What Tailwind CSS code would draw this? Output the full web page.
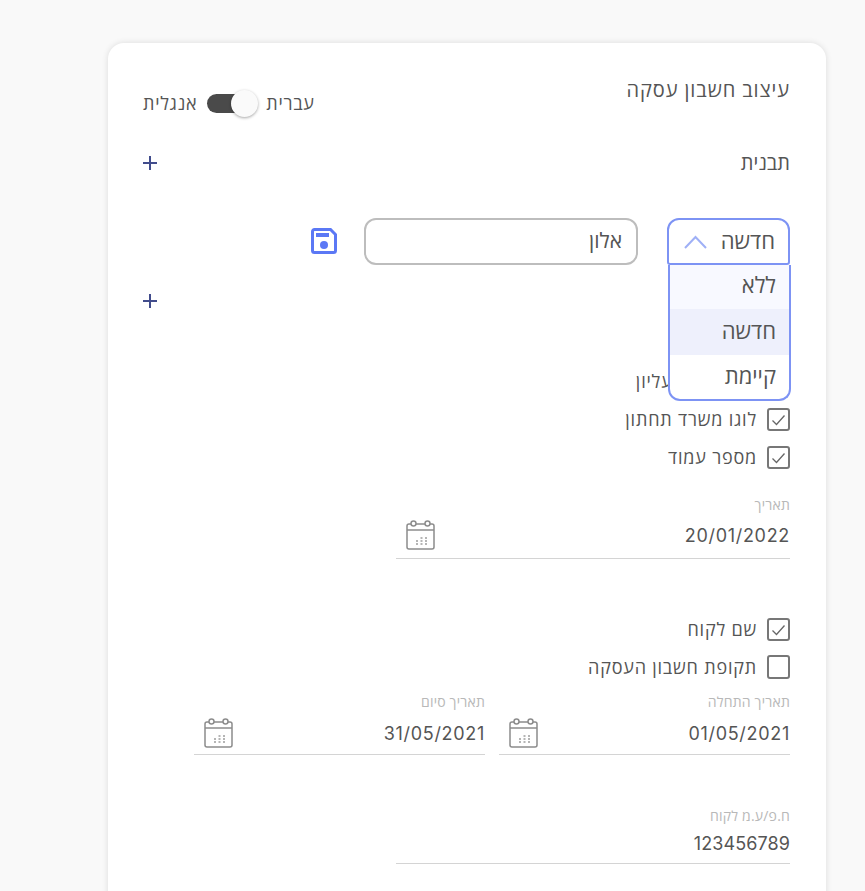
<!DOCTYPE html>
<html dir="rtl" lang="he">
  <head>
    <title>עיצוב חשבון עסקה</title>
    <script src="https://cdn.jsdelivr.net/npm/@tailwindcss/browser@4"></script>
  </head>
  <body>
    <div class="h-[891px] overflow-hidden bg-[#f9f9f9] pt-[43px] pr-[39px] font-['Open_Sans','Noto_Sans','Liberation_Sans',sans-serif] text-[#555]">
      <div class="w-[718px] h-[900px] bg-white rounded-2xl shadow-[0_0_6px_rgba(0,0,0,0.12)] pt-[34px] pr-[36px] pl-[35px]">
        <!-- header -->
        <div class="flex justify-between items-start">
          <div class="h-[26px] text-[20px] leading-[26px] tracking-[0.9px]">עיצוב חשבון עסקה</div>
          <div class="flex items-center mt-[13px] h-[26px] text-[18px] tracking-[0.7px]">
            <span>עברית</span>
            <div class="relative w-[42px] h-[19px] mr-[17px] ml-[10px] bg-[#4a4a4a] rounded-full">
              <div class="absolute left-[24px] top-[-4px] w-[27px] h-[27px] rounded-full bg-[#fafafa] shadow-[0_1px_3px_rgba(0,0,0,0.35)]"></div>
            </div>
            <span>אנגלית</span>
          </div>
        </div>

        <!-- template -->
        <div class="flex justify-between items-center h-[26px] mt-[34px]">
          <div class="text-[20px]">תבנית</div>
          <svg class="w-[14px] h-[14px]" viewBox="0 0 14 14" fill="none" stroke="#414c8c" stroke-width="2"><path d="M7 0v14M0 7h14"/></svg>
        </div>

        <div class="flex items-center mt-[42px]">
          <div class="relative w-[123px] h-[47px] shrink-0">
            <div class="flex justify-between items-center h-full pr-[13px] pl-[15px] border-2 border-[#7d93f4] rounded-t-xl rounded-b-[3px] text-[22px]">
              <span class="-mt-[3px]">חדשה</span>
              <svg class="w-[23px] h-[14px]" viewBox="0 0 23 14" fill="none" stroke="#9fb0f6" stroke-width="2"><path d="M1 13 11.500 2 22 13"/></svg>
            </div>
            <!-- open dropdown -->
            <div class="absolute z-10 top-[47px] right-[-1px] w-[123px] h-[136px] overflow-hidden bg-white border-2 border-t-0 border-[#7d93f4] rounded-b-xl text-[22px]">
              <div class="h-[44px] pr-[13px] leading-[38px] bg-[#f8f9ff]">ללא</div>
              <div class="h-[46px] pr-[13px] leading-[43px] bg-[#eef0fc]">חדשה</div>
              <div class="h-[44px] pr-[13px] leading-[41px]">קיימת</div>
            </div>
          </div>
          <div class="flex items-center w-[274px] h-[47px] mr-[29px] pr-[14px] pb-[2px] border-2 border-[#bdbdbd] rounded-xl text-[21px]">אלון</div>
          <svg class="w-[26px] h-[26px] mr-[27px] -mt-[1px]" viewBox="0 0 26 26" fill="none">
            <path d="M3.500 1.500h16l5 5v16a2 2 0 0 1-2 2h-19a2 2 0 0 1-2-2v-19a2 2 0 0 1 2-2z" stroke="#5b78f5" stroke-width="3"/>
            <rect x="5" y="5" width="13" height="4" fill="#5b78f5"/>
            <circle cx="13" cy="17" r="4" fill="#5b78f5"/>
          </svg>
        </div>

        <div class="flex justify-end items-center h-[20px] mt-[26px]">
          <svg class="w-[14px] h-[14px]" viewBox="0 0 14 14" fill="none" stroke="#414c8c" stroke-width="2"><path d="M0 7h14M7 0v14"/></svg>
        </div>

        <!-- logo options -->
        <div class="flex flex-col gap-[15px] mt-[59px] text-[18px] tracking-[0.8px]">
          <label class="flex items-center gap-[10px] h-[23px]">
            <span class="flex items-center justify-center w-[23px] h-[23px] border-2 border-[#777] rounded-[3px]">
              <svg class="w-[15px] h-[12px]" viewBox="0 0 15 12" fill="none" stroke="#666" stroke-width="1.300"><path d="M1.500 6.500 5.500 10.500 13.500 1.500"/></svg>
            </span>
            <span>לוגו משרד עליון</span>
          </label>
          <label class="flex items-center gap-[10px] h-[23px]">
            <span class="flex items-center justify-center w-[23px] h-[23px] border-2 border-[#777] rounded-[3px]">
              <svg class="w-[15px] h-[12px]" viewBox="0 0 15 12" fill="none" stroke="#666" stroke-width="1.300"><path d="M1.500 6.500 5.500 10.500 13.500 1.500"/></svg>
            </span>
            <span>לוגו משרד תחתון</span>
          </label>
          <label class="flex items-center gap-[10px] h-[23px]">
            <span class="flex items-center justify-center w-[23px] h-[23px] border-2 border-[#777] rounded-[3px]">
              <svg class="w-[15px] h-[12px]" viewBox="0 0 15 12" fill="none" stroke="#666" stroke-width="1.300"><path d="M1.500 6.500 5.500 10.500 13.500 1.500"/></svg>
            </span>
            <span>מספר עמוד</span>
          </label>
        </div>

        <!-- date -->
        <div class="w-[394px] mt-[29px] pb-[10px] border-b border-[#d4d4d4]">
          <div class="h-[14px] text-[14px] leading-[14px] tracking-[0.2px] text-[#b8b8b8]">תאריך</div>
          <div class="flex justify-between items-center h-[26px] mt-[10px] pl-[10px] font-['Inter'] text-[18px] tracking-[0.7px]">
            <span dir="ltr">20/01/2022</span>
            <svg class="w-[29px] h-[30px] -my-[2px]" viewBox="0 0 29 30" fill="none" stroke="#8c8c8c" stroke-width="1.500">
              <rect x="1" y="4" width="27" height="25" rx="2"/>
              <path d="M1 10h27"/>
              <circle cx="7.500" cy="3.500" r="2.500" fill="#fff"/>
              <circle cx="21.500" cy="3.500" r="2.500" fill="#fff"/>
              <path d="M11 20v5M15.500 17v8M20 17v8" stroke="#b5b5b5" stroke-width="2" stroke-dasharray="2 1"/>
            </svg>
          </div>
        </div>

        <div class="flex flex-col gap-[14px] mt-[59px] text-[18px] tracking-[0.8px]">
          <label class="flex items-center gap-[10px] h-[23px]">
            <span class="flex items-center justify-center w-[23px] h-[23px] border-2 border-[#777] rounded-[3px]">
              <svg class="w-[15px] h-[12px]" viewBox="0 0 15 12" fill="none" stroke="#666" stroke-width="1.300"><path d="M1.500 6.500 5.500 10.500 13.500 1.500"/></svg>
            </span>
            <span>שם לקוח</span>
          </label>
          <label class="flex items-center gap-[10px] h-[24px]">
            <span class="w-[23px] h-[24px] border-2 border-[#777] rounded-[3px]"></span>
            <span>תקופת חשבון העסקה</span>
          </label>
        </div>

        <!-- period -->
        <div class="flex gap-[14px] mt-[16px]">
          <div class="w-[291px] pb-[8px] border-b border-[#d4d4d4]">
            <div class="h-[14px] text-[14px] leading-[14px] tracking-[0.2px] text-[#b8b8b8]">תאריך התחלה</div>
            <div class="flex justify-between items-center h-[26px] mt-[11px] pl-[10px] font-['Inter'] text-[18px] tracking-[0.7px]">
              <span dir="ltr">01/05/2021</span>
              <svg class="w-[29px] h-[30px] -my-[2px]" viewBox="0 0 29 30" fill="none" stroke="#8c8c8c" stroke-width="1.500">
                <rect x="1" y="4" width="27" height="25" rx="2"/>
                <path d="M1 10h27"/>
                <circle cx="7.500" cy="3.500" r="2.500" fill="#fff"/>
                <circle cx="21.500" cy="3.500" r="2.500" fill="#fff"/>
                <path d="M11 20v5M15.500 17v8M20 17v8" stroke="#b5b5b5" stroke-width="2" stroke-dasharray="2 1"/>
              </svg>
            </div>
          </div>
          <div class="w-[291px] pb-[8px] border-b border-[#d4d4d4]">
            <div class="h-[14px] text-[14px] leading-[14px] tracking-[0.2px] text-[#b8b8b8]">תאריך סיום</div>
            <div class="flex justify-between items-center h-[26px] mt-[11px] pl-[10px] font-['Inter'] text-[18px] tracking-[0.7px]">
              <span dir="ltr">31/05/2021</span>
              <svg class="w-[29px] h-[30px] -my-[2px]" viewBox="0 0 29 30" fill="none" stroke="#8c8c8c" stroke-width="1.500">
                <rect x="1" y="4" width="27" height="25" rx="2"/>
                <path d="M1 10h27"/>
                <circle cx="7.500" cy="3.500" r="2.500" fill="#fff"/>
                <circle cx="21.500" cy="3.500" r="2.500" fill="#fff"/>
                <path d="M11 20v5M15.500 17v8M20 17v8" stroke="#b5b5b5" stroke-width="2" stroke-dasharray="2 1"/>
              </svg>
            </div>
          </div>
        </div>

        <!-- customer id -->
        <div class="w-[394px] mt-[54px] pb-[7px] border-b border-[#d4d4d4]">
          <div class="h-[14px] text-[14px] leading-[14px] tracking-[0.2px] text-[#b8b8b8]">ח.פ/ע.מ לקוח</div>
          <div class="flex items-center h-[26px] mt-[7px] font-['Inter'] text-[18px] tracking-[0.1px]">123456789</div>
        </div>
      </div>
    </div>
  </body>
</html>
